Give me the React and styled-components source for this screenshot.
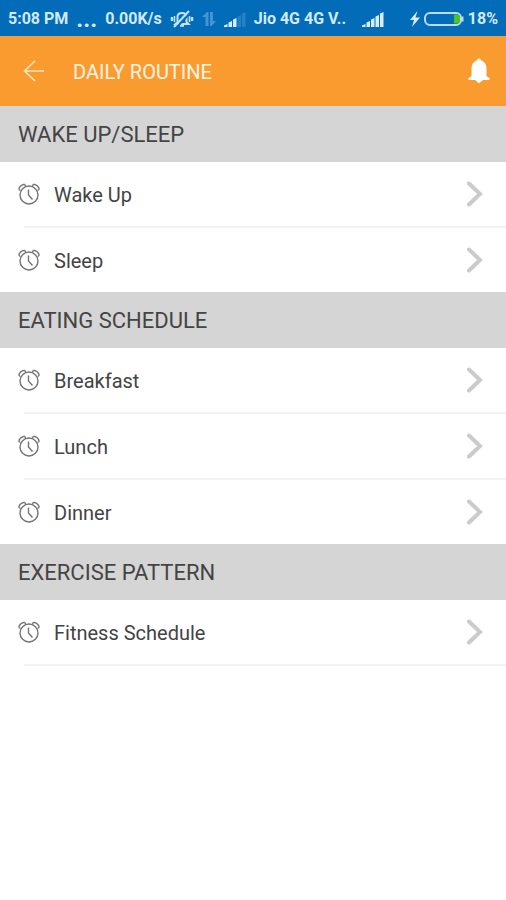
import styled, { createGlobalStyle } from 'styled-components';

const sections = [
  { title: 'WAKE UP/SLEEP', items: ['Wake Up', 'Sleep'] },
  { title: 'EATING SCHEDULE', items: ['Breakfast', 'Lunch', 'Dinner'] },
  { title: 'EXERCISE PATTERN', items: ['Fitness Schedule'], closed: true },
];

function MutedBellIcon() {
  return (
    <svg width="24" height="18" viewBox="0 0 24 18" fill="none" stroke="#c3e2fa">
      <path d="M7.500 12V7c0-2.500 2-4 4.500-4s4.500 1.500 4.500 4v5l2 2h-13z" strokeWidth="2" />
      <path d="M10 15.500h4" strokeWidth="2.5" />
      <path d="M2 7v4M22 7v4" strokeWidth="2.5" />
      <path d="M4.500 6v6M19.500 6v6" strokeWidth="1.5" />
      <path d="M21 2L7 17" stroke="#026cb8" strokeWidth="2" />
      <path d="M19 1L4 17" strokeWidth="2" />
    </svg>
  );
}

function DataArrowsIcon() {
  return (
    <svg width="14" height="16" viewBox="0 0 14 16" fill="#4394d2">
      <path d="M3.500 15V6H0l5-5h1.500v14z" />
      <path d="M8 1h3v9h3l-4.500 5H8z" />
    </svg>
  );
}

function SignalIcon({ level }) {
  return (
    <svg width="22" height="16" viewBox="0 0 22 16">
      {[0, 1, 2, 3, 4].map(i => {
        const left = i * 4.5;
        const top = 13 - i * 3;
        return (
          <path
            key={i}
            d={`M${left} 16V${top + 1.5}L${left + 3.5} ${top}V16z`}
            fill={i < level ? '#d8ecfb' : '#2580c6'}
          />
        );
      })}
    </svg>
  );
}

function BoltIcon() {
  return (
    <svg width="10" height="16" viewBox="0 0 10 16" fill="#d8ecfb">
      <path d="M7.500 0L0 9h4L2 16l8-9.500H5.500z" />
    </svg>
  );
}

function BatteryIcon() {
  return (
    <svg width="40" height="16" viewBox="0 0 40 16">
      <rect x="1" y="2" width="36" height="12" rx="5" fill="none" stroke="#b9dcf8" strokeWidth="2" />
      <path d="M30 3.500h3a3 3 0 0 1 3 3v3a3 3 0 0 1-3 3h-3z" fill="#4cc51c" />
      <path d="M38.500 5.500v5" stroke="#b9dcf8" strokeWidth="2" />
    </svg>
  );
}

function BackIcon() {
  return (
    <svg width="22" height="22" viewBox="0 0 22 22" fill="none" stroke="#ffe6c4" strokeWidth="1.600">
      <path d="M21 11H1.500M12 1L1.500 11L12 21" />
    </svg>
  );
}

function BellIcon() {
  return (
    <svg width="22" height="26" viewBox="0 0 22 26" fill="#fff">
      <path d="M11 0.500c1 0 1.800.7 2 1.700 3.400 1.200 5.500 4 5.500 7.800v8l3 2.200v1.800h-6.500L11 25.200 7 22H.5v-1.800l3-2.200v-8c0-3.800 2.100-6.600 5.500-7.800.2-1 1-1.700 2-1.700z" />
    </svg>
  );
}

function AlarmIcon() {
  return (
    <svg width="22" height="22" viewBox="0 0 22 22" fill="none" stroke="#747474" strokeWidth="1.400">
      <circle cx="11" cy="12" r="9" />
      <path d="M10.500 6.500V12l4 4.500" />
      <path d="M0.800 6.500C1 4 3.500 1.500 6.500 1.200M21.200 6.500C21 4 18.500 1.500 15.500 1.200" />
      <path d="M0.800 6.500l1.700 1M6.500 1.200l1 1.800M21.200 6.500l-1.700 1M15.500 1.200l-1 1.800" />
    </svg>
  );
}

function ChevronIcon() {
  return (
    <svg width="18" height="26" viewBox="0 0 18 26" fill="none" stroke="#cbcbcb" strokeWidth="4">
      <path d="M3 2.500L14 13L3 23.500" strokeLinecap="round" />
    </svg>
  );
}

function StatusBar() {
  return (
    <Status>
      <span>5:08 PM</span>
      <Dots>...</Dots>
      <span>0.00K/s</span>
      <MutedBellIcon />
      <DataArrowsIcon />
      <SignalIcon level={3} />
      <Carrier>Jio 4G 4G V..</Carrier>
      <SignalIcon level={5} />
      <Power>
        <BoltIcon />
        <BatteryIcon />
        <span>18%</span>
      </Power>
    </Status>
  );
}

export default function App() {
  return (
    <>
      <GlobalStyle />
      <StatusBar />
      <Header>
        <IconButton type="button" aria-label="Back">
          <BackIcon />
        </IconButton>
        <Title>DAILY ROUTINE</Title>
        <IconButton type="button" aria-label="Notifications">
          <BellIcon />
        </IconButton>
      </Header>
      <main>
        {sections.map(({ title, items, closed }) => (
          <section key={title}>
            <SectionTitle>{title}</SectionTitle>
            <List $closed={closed}>
              {items.map(item => (
                <li key={item}>
                  <RowButton type="button">
                    <AlarmIcon />
                    <RowLabel>{item}</RowLabel>
                    <ChevronIcon />
                  </RowButton>
                </li>
              ))}
            </List>
          </section>
        ))}
      </main>
    </>
  );
}

// --------Styles-------

const GlobalStyle = createGlobalStyle`
  * {
    box-sizing: border-box;
  }

  body {
    margin: 0;
    background-color: #fff;
    font-family: Roboto, sans-serif;
  }

  svg {
    display: block;
    flex-shrink: 0;
  }
`;

const Status = styled.div`
  display: flex;
  align-items: center;
  gap: 8px;
  height: 36px;
  padding: 2px 8px 0;
  background-color: #026cb8;
  color: #d3eafb;
  font-size: 16px;
  font-weight: 700;
  line-height: 20px;
  white-space: nowrap;
`;

const Dots = styled.span`
  font-size: 24px;
`;

const Carrier = styled.span`
  padding-right: 8px;
`;

const Power = styled.div`
  display: flex;
  align-items: center;
  gap: 4px;
  margin-left: auto;
`;

const Header = styled.header`
  display: flex;
  align-items: center;
  height: 70px;
  padding: 0 16px 0 23px;
  background-color: #fa9b30;
`;

const IconButton = styled.button`
  padding: 0;
  border: 0;
  background: none;
  cursor: pointer;
`;

const Title = styled.h1`
  flex: 1;
  margin: 0;
  padding: 2px 0 0 28px;
  color: #fff4e4;
  font-size: 20px;
  font-weight: 400;
  line-height: 24px;
`;

const SectionTitle = styled.h2`
  margin: 0;
  padding: 16px 18px 14px;
  background-color: #d5d5d5;
  color: #444;
  font-size: 22px;
  font-weight: 400;
  line-height: 26px;
`;

const List = styled.ul`
  margin: 0;
  padding: 0;
  list-style: none;

  li {
    margin-left: 24px;
    border-bottom: 2px solid #f2f2f2;
  }

  li:last-child {
    border-bottom-width: ${({ $closed }) => ($closed ? '2px' : '0')};
  }
`;

const RowButton = styled.button`
  display: flex;
  align-items: center;
  width: calc(100% + 24px);
  height: 64px;
  margin-left: -24px;
  padding: 0 22px 0 18px;
  border: 0;
  background: none;
  color: #444;
  font: inherit;
  font-size: 20px;
  line-height: 24px;
  text-align: left;
  cursor: pointer;
`;

const RowLabel = styled.span`
  flex: 1;
  padding: 2px 0 0 14px;
`;
